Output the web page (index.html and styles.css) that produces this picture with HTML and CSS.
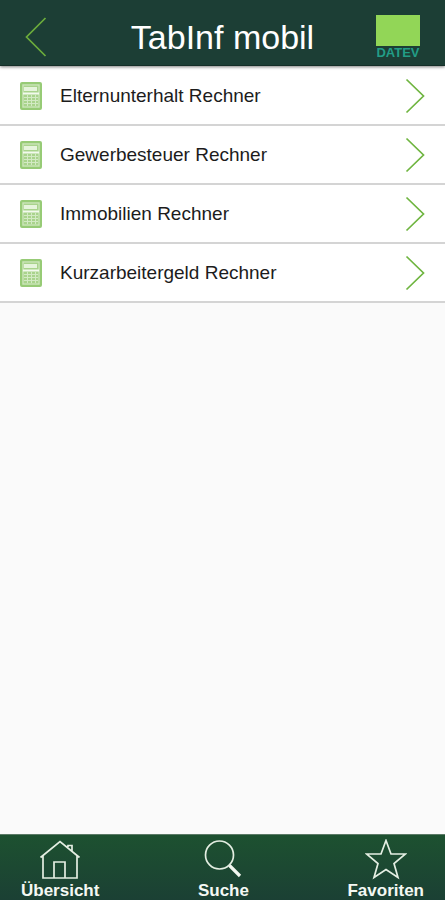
FILE: index.html
```html
<!DOCTYPE html>
<html lang="de">
<head>
<meta charset="utf-8">
<meta name="viewport" content="width=device-width, initial-scale=1">
<title>TabInf mobil</title>
<link rel="stylesheet" href="styles.css">
</head>
<body>
<svg class="sprite" aria-hidden="true">
  <symbol id="calculator" viewBox="0 0 22 28">
    <rect x="1" y="1" width="20" height="26" rx="1" fill="#a9d38c" stroke="#97cb76" stroke-width="2"/>
    <rect x="3" y="3" width="16" height="22" fill="none" stroke="#d3eac4" stroke-width="1"/>
    <rect x="4" y="5" width="13" height="4" fill="#e6f4dc"/>
    <path d="M3 11.500h16" stroke="#f3faee" stroke-width="2"/>
    <path d="M4 15.500h14M4 18.500h14M4 21.500h14M7.500 13v11M11.500 13v11M15.500 13v11" stroke="#d3eac4" stroke-width="1"/>
  </symbol>
  <symbol id="chevron" viewBox="0 0 20 36">
    <path d="M1.500 1.500 18.500 18 1.500 34.500" fill="none" stroke="#6fb540" stroke-width="1.700"/>
  </symbol>
</svg>
<header class="topbar">
  <button class="back" type="button" aria-label="Zurück">
    <svg viewBox="0 0 22 40" aria-hidden="true"><path d="M20.500 1 1.500 20l19 19" fill="none" stroke="#6cad3c" stroke-width="1.700"/></svg>
  </button>
  <h1>TabInf mobil</h1>
  <div class="logo">
    <span class="logo-block"></span>
    <span class="logo-name">DATEV</span>
  </div>
</header>
<main>
  <ul class="list">
    <li><a href="#elternunterhalt"><svg class="calc" aria-hidden="true"><use href="#calculator"/></svg><span>Elternunterhalt Rechner</span><svg class="chevron" aria-hidden="true"><use href="#chevron"/></svg></a></li>
    <li><a href="#gewerbesteuer"><svg class="calc" aria-hidden="true"><use href="#calculator"/></svg><span>Gewerbesteuer Rechner</span><svg class="chevron" aria-hidden="true"><use href="#chevron"/></svg></a></li>
    <li><a href="#immobilien"><svg class="calc" aria-hidden="true"><use href="#calculator"/></svg><span>Immobilien Rechner</span><svg class="chevron" aria-hidden="true"><use href="#chevron"/></svg></a></li>
    <li><a href="#kurzarbeitergeld"><svg class="calc" aria-hidden="true"><use href="#calculator"/></svg><span>Kurzarbeitergeld Rechner</span><svg class="chevron" aria-hidden="true"><use href="#chevron"/></svg></a></li>
  </ul>
</main>
<nav class="tabs">
  <a href="#uebersicht">
    <svg viewBox="0 0 42 42" aria-hidden="true"><path d="M1.500 18.500 21 2.500l19.500 16M4 17v22h34V17M15 39V23h11v16M29 8V6.500h4V12" fill="none" stroke="#e4eee2" stroke-width="1.700"/></svg>
    <span>Übersicht</span>
  </a>
  <a href="#suche">
    <svg viewBox="0 0 42 42" aria-hidden="true"><circle cx="17.500" cy="16" r="14" fill="none" stroke="#e4eee2" stroke-width="1.700"/><path d="m27.500 26.500 10.500 10.500" stroke="#f2f7f0" stroke-width="3.200"/></svg>
    <span>Suche</span>
  </a>
  <a href="#favoriten">
    <svg viewBox="0 0 42 42" aria-hidden="true"><path d="m21 1.500 5 13.500h14.500L29 24.500l4 14-12-8-12 8 4-14L1.500 15H16Z" fill="none" stroke="#e4eee2" stroke-width="1.700"/></svg>
    <span>Favoriten</span>
  </a>
</nav>
</body>
</html>
```
FILE: styles.css
```css
* {
  box-sizing: border-box;
}

body {
  margin: 0;
  min-height: 100vh;
  display: flex;
  flex-direction: column;
  background: #fafafa;
  color: #1c1c1c;
  font-family: "Liberation Sans", Arial, sans-serif;
}

.sprite {
  position: absolute;
  width: 0;
  height: 0;
}

.topbar {
  display: grid;
  grid-template-columns: 1fr auto 1fr;
  align-items: center;
  height: 66px;
  padding: 8px 25px 0;
  background: #1c3e35;
  border-bottom: 1px solid #142e27;
  box-shadow: 0 1px 3px rgba(0, 0, 0, 0.5);
  position: relative;
}

.back {
  justify-self: start;
  padding: 0;
  border: 0;
  background: none;
}

.back svg {
  display: block;
  width: 22px;
  height: 40px;
}

h1 {
  margin: 0;
  color: #fff;
  font-size: 34px;
  line-height: 40px;
  font-weight: 400;
}

.logo {
  justify-self: end;
  display: flex;
  flex-direction: column;
  align-items: center;
  width: 44px;
}

.logo-block {
  width: 44px;
  height: 31px;
  background: #92d657;
}

.logo-name {
  color: #229d86;
  font-size: 13px;
  font-weight: 700;
  line-height: 13px;
}

main {
  flex: 1;
}

.list {
  margin: 0;
  padding: 1px 0 0;
  list-style: none;
  background: #fff;
}

.list a {
  display: flex;
  align-items: center;
  height: 59px;
  padding: 0 20px;
  border-bottom: 2px solid #d4d4d4;
  color: inherit;
  font-size: 19px;
  text-decoration: none;
}

.calc {
  width: 22px;
  height: 28px;
  margin-right: 18px;
}

.chevron {
  width: 20px;
  height: 36px;
  margin-left: auto;
}

.tabs {
  display: flex;
  justify-content: space-between;
  height: 66px;
  padding: 4px 21px 0;
  border-top: 1px solid #5b7a66;
  background: linear-gradient(#1d5130, #1b4034);
}

.tabs a {
  display: flex;
  flex-direction: column;
  align-items: center;
  color: #f4f8f3;
  font-size: 17px;
  line-height: 20px;
  font-weight: 700;
  text-decoration: none;
}

.tabs svg {
  flex: none;
  width: 42px;
  height: 42px;
}
```
